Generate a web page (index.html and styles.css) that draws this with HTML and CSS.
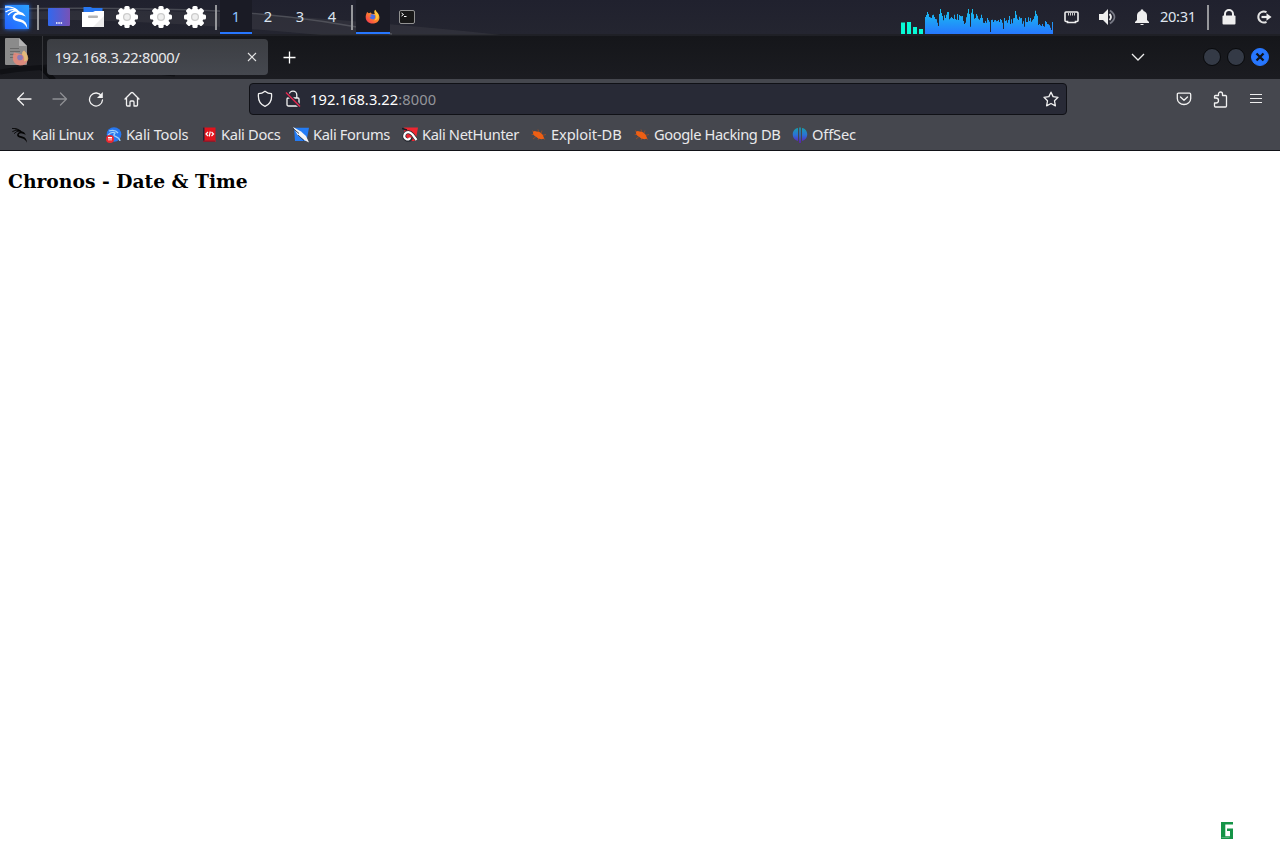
FILE: index.html
```html
<!DOCTYPE html>
<html lang="en">
<head>
<meta charset="utf-8">
<title>192.168.3.22:8000/</title>
<link rel="stylesheet" href="styles.css">
</head>
<body>
<svg class="defs" width="0" height="0">
  <defs>
    <linearGradient id="gKali" x1="0" y1="1" x2="1" y2="0"><stop offset="0" stop-color="#2463ff"/><stop offset="1" stop-color="#2ba0ff"/></linearGradient>
    <linearGradient id="gDesk" x1="0" y1="0" x2="1" y2="0"><stop offset="0" stop-color="#3168ee"/><stop offset="1" stop-color="#7852b6"/></linearGradient>
    <linearGradient id="gGraph" gradientUnits="userSpaceOnUse" x1="0" y1="8" x2="0" y2="34"><stop offset="0" stop-color="#16c6ee"/><stop offset="1" stop-color="#2777ff"/></linearGradient>
    <linearGradient id="gFox" x1="1" y1="0" x2="0" y2="1"><stop offset="0" stop-color="#ffe14a"/><stop offset=".45" stop-color="#ff8a2a"/><stop offset="1" stop-color="#f32b56"/></linearGradient>
    <linearGradient id="gOff" gradientUnits="userSpaceOnUse" x1="0" y1="0" x2="0" y2="16"><stop offset="0" stop-color="#16a3a8"/><stop offset=".5" stop-color="#2b72d6"/><stop offset="1" stop-color="#6417bb"/></linearGradient>
    <symbol id="dragon" viewBox="0 0 24 24">
      <path d="M0 2.200Q7 1 12.500 5.500M.5 7Q6 3 12.500 5.500M3 10Q7 5.500 12.500 6" fill="none" stroke="currentColor" stroke-width="1.300"/>
      <path d="M4 4Q11 3 14.500 6.500L18 8 20.800 11.500 16.500 10Q12 8.600 10.200 11C9.500 13 12 13.600 15.500 14.200Q22.500 16 22.300 23.500Q20 18 14.500 16.800C9 16 6.500 13.500 8.200 10.300Q9.500 8 12.300 7.300Q9 4.700 4 4Z" fill="currentColor"/>
    </symbol>
    <symbol id="gear" viewBox="0 0 22 22">
      <g fill="#fff"><circle cx="11" cy="11" r="8.600"/><rect x="8.400" y="0" width="5.200" height="22" rx="1.500"/><rect x="8.400" y="0" width="5.200" height="22" rx="1.500" transform="rotate(45 11 11)"/><rect x="8.400" y="0" width="5.200" height="22" rx="1.500" transform="rotate(90 11 11)"/><rect x="8.400" y="0" width="5.200" height="22" rx="1.500" transform="rotate(135 11 11)"/></g>
      <circle cx="11" cy="11" r="3.400" fill="#efefef" stroke="#cdcdcd" stroke-width="1.300"/>
    </symbol>
    <symbol id="fox" viewBox="0 0 16 16">
      <path d="M2.200 3.200 4 4.600 6.300 3.800 7 5 10.400 5.400C9.800 3.800 9.800 1.600 11 .8 11.300 2.500 13 3.200 14.500 5.600 17.400 12 12.500 15.500 8 15.500S.2 12 .8 7.400C1 5.700 1.700 5 2.200 3.200Z" fill="url(#gFox)"/>
      <path d="M5.200 6.400Q8 4.500 10.800 7 11.600 10.500 8.600 11.200 5.500 11.200 4.800 8.600L7.200 7.600Z" fill="#4a6fea"/>
      <path d="M11 .8C9.600 2.600 10.600 5 11.700 6.800 12.600 9.300 11 11.400 9.400 12 14 12 15 8 13.400 5 12.600 3.400 11.200 2.600 11 .8Z" fill="#ffc93d"/>
    </symbol>
    <symbol id="bug" viewBox="0 0 16 16">
      <path d="M1 3.700 4 5.500M.7 7.500 4 7.500M2 12 5 9.500M7 2.500 8 5.500M11 3.500 10 6.500M15 7.500 11 8.500M14 12.500 11 10.500M7 13 8 10.500" stroke="#a54c20" stroke-width=".8" fill="none"/>
      <path d="M2 5Q3.500 3.200 5.500 4.500 9 4.200 11.500 7.500L13.300 11.500 10.500 12.200Q7 12.200 4.700 9.600 1.800 8 2 5Z" fill="#ed5f14"/>
    </symbol>
  </defs>
</svg>

<header class="panel">
  <svg class="arc" width="640" height="35"><path d="M0 13C170 3 390 21 570 43L390 42Q180 19 0 19Z" fill="#777" opacity=".14"/><path d="M0 9Q120 7 218 11Q310 16 392 34" fill="none" stroke="#707278" opacity=".5" stroke-width="1.500"/></svg>
  <div class="cell"><svg class="kali" width="34" height="34"><rect x="5" y="5" width="24" height="24" fill="url(#gKali)"/><svg x="5" y="5" width="24" height="24" color="#fff"><use href="#dragon"/></svg></svg></div>
  <i class="sep"></i>
  <div class="cell"><svg width="22" height="18"><rect width="22" height="18" rx="1" fill="url(#gDesk)"/><path d="M8 15h1.500m.8 0h1.500m.8 0h1.500" stroke="#fff" stroke-width="1.600"/></svg></div>
  <div class="cell"><svg width="22" height="20"><path d="M1.500 0h7l2 1h10v8H1.500z" fill="#2777f2"/><path d="M0 5h11l2-1h9V20H0z" fill="#fff"/><path d="M22 9v11H11z" fill="#ececec"/><rect x="6" y="8.500" width="10" height="2.600" rx="1" fill="#b5b5b5"/></svg></div>
  <div class="cell"><svg width="22" height="22"><use href="#gear"/></svg></div>
  <div class="cell"><svg width="22" height="22"><use href="#gear"/></svg></div>
  <div class="cell"><svg width="22" height="22"><use href="#gear"/></svg></div>
  <i class="sep"></i>
  <nav class="spaces"><span class="active">1</span><span>2</span><span>3</span><span>4</span></nav>
  <i class="sep"></i>
  <div class="cell active"><svg width="15" height="15"><use href="#fox"/></svg></div>
  <div class="cell"><svg width="16" height="14"><rect x=".5" y=".5" width="15" height="13" rx="1.500" fill="#181818" stroke="#929292"/><path d="M2.500 3l2 1.500-2 1.500M5 6.500h2.500" fill="none" stroke="#fff"/></svg></div>
  <div class="tray">
    <svg class="graph" width="154" height="35">
      <g fill="#08fad6"><path d="M1 22.500h4V34H1zM7 22h4v12H7zM13 27h4v7h-4zM19 29h4v5h-4z"/></g>
      <path transform="translate(25)" fill="url(#gGraph)" d="M0 34V17h1V15h1V12h1V14h1V17h1V17.500h1V18h1V15.300h1V14.700h1V17h1V19h1V19.300h1V22.700h1V26h1V14h1V9h1V13h1V16h1V20.300h1V15.300h1V18h1V14.700h1V12h1V12h1V19.300h1V18.300h1V17h1V18h1V19h1V14.700h1V19h1V19.700h1V14h1V20h1V15h1V16h1V16.300h1V16h1V21h1V24h1V22.700h1V17.300h1V13.300h1V9h1V14h1V26.700h1V12.700h1V9h1V14.300h1V18.700h1V18h1V14h1V15.700h1V18.700h1V19.700h1V18h1V14.700h1V18h1V22.700h1V23h1V21h1V22.700h1V18h1V20h1V21.700h1V32h1V20h1V19.700h1V22h1V20.300h1V20h1V21.300h1V21h1V20h1V22h1V19h1V20h1V22.700h1V29h1V18h1V21h1V20.300h1V22.700h1V20h1V16h1V24h1V19.300h1V23.300h1V18.300h1V18h1V11h1V14.700h1V18.700h1V20h1V16.700h1V18.300h1V18h1V23.700h1V21.300h1V26.700h1V18h1V22h1V22h1V17.300h1V21h1V18h1V21.700h1V20.300h1V19h1V16.300h1V10.700h1V14h1V15.700h1V25h1V24h1V25.300h1V26h1V24h1V26h1V26.700h1V21h1V22h1V24h1V24.300h1V25.300h1V27.700h1V30h1V22h1V24V34Z"/>
    </svg>
    <div class="tcell net"><svg width="15" height="13"><path d="M2 1h11q1 0 1 1v7.500q0 1-1 1h-1.500v1h-8v-1H2q-1 0-1-1V2q0-1 1-1z" fill="none" stroke="#eee" stroke-width="1.600"/><path d="M4.500 2v2.500m2-2.500v2.500m2-2.500v2.500m2-2.500v2.500" stroke="#ccc"/></svg></div>
    <div class="tcell"><svg width="18" height="16"><path d="M0 5h4l5-5v16l-5-5H0z" fill="#eee"/><path d="M10.500 5q3 3 0 6" fill="none" stroke="#eee" stroke-width="1.800"/><path d="M11 1.500q9 6.500 0 13" fill="none" stroke="#777984" stroke-width="1.700"/></svg></div>
    <div class="tcell bell"><svg width="14" height="16"><path d="M0 14V13l2-2V6.500Q2 3 5.500 2L6 .5h2l.5 1.500Q12 3 12 6.500V11l2 2v1zM5 15h4l-1 1H6z" fill="#eee"/></svg></div>
    <time>20:31</time>
    <i class="sep"></i>
    <div class="cell"><svg width="14" height="16"><path d="M3 8V5a4 4 0 018 0v3" fill="none" stroke="#eee" stroke-width="2"/><rect x=".5" y="6.500" width="13" height="9" rx="1" fill="#eee"/></svg></div>
    <div class="cell exit"><svg width="16" height="14"><path d="M10.500 2.200A5.500 5.500 0 1010.500 11.800" fill="none" stroke="#e4e4e4" stroke-width="2"/><path d="M5.500 7H12" stroke="#eee" stroke-width="2.200"/><path d="M10.500 3.200L15.500 7l-5 3.800z" fill="#eee"/></svg></div>
  </div>
</header>

<div class="titlebar">
  <svg class="swirl" width="380" height="43"><path d="M0 36Q70 24 175 38" fill="none" stroke="#101115" stroke-width="5"/><path d="M42 32l12 12" stroke="#0c0d10" stroke-width="5"/></svg>
  <div class="appicon"><svg width="24" height="28"><path d="M1 0h13l8 8v18q0 1-1 1H1q-1 0-1-1V1q0-1 1-1z" fill="#8b8b8b"/><path d="M14 0v8h8z" fill="#b4b4b4"/><path d="M5 10.500h9M5 13.500h10M5 16.500h6M5 19.500h4" stroke="#686868"/><g transform="translate(7 11.500)" opacity=".85"><path d="M2 3Q6 3.500 10 5 10 2 12 1 17 6 16 10.500 14 16 8 16 1 15 .8 8.500 1 5 2 3Z" fill="#e98a7b"/><path d="M12 1Q17 6 16 10.500L12 12Q13 7 10 5 10 2 12 1Z" fill="#f0c478"/><circle cx="8" cy="8" r="2.800" fill="#8b78bd"/></g></svg></div>
  <div class="tab"><span>192.168.3.22:8000/</span><svg width="10" height="10"><path d="M1 1l8 8M9 1L1 9" stroke="#e4e4e4" stroke-width="1.100"/></svg></div>
  <svg class="plus" width="13" height="13"><path d="M6.500 .5v12M.5 6.500h12" stroke="#fff" stroke-width="1.300"/></svg>
  <svg class="chevron" width="14" height="8"><path d="M1 1l6 6 6-6" fill="none" stroke="#eee" stroke-width="1.300"/></svg>
  <div class="winbtns"><b></b><b></b><b class="close"><svg width="10" height="10"><path d="M1.500 1.500l7 7M8.500 1.500l-7 7" stroke="#101318" stroke-width="2.300"/></svg></b></div>
</div>

<div class="navbar">
  <div class="nbtn"><svg width="16" height="14"><path d="M15 7H1.500M7.500 1l-6 6 6 6" class="line"/></svg></div>
  <div class="nbtn dim"><svg width="16" height="14"><path d="M1 7h13.500M8.500 1l6 6-6 6" class="line"/></svg></div>
  <div class="nbtn"><svg width="16" height="16"><path d="M13.500 5A6.500 6.500 0 1014.500 9" class="line"/><path d="M14.800 1v6H9z" fill="#f2f2f2"/></svg></div>
  <div class="nbtn home"><svg width="16" height="16"><path d="M1 8l6.200-6.200q.8-.7 1.600 0L15 8M2.500 7v7q0 1 1 1H6v-4q0-1 1-1h2q1 0 1 1v4h2.500q1 0 1-1V7" class="line"/></svg></div>
  <div class="urlbar">
    <svg class="shield" width="16" height="18"><path d="M8 1.200Q11 3.600 14.500 3.700C15.200 10 12.500 14.500 8 16.300 3.500 14.500.8 10 1.500 3.700Q5 3.600 8 1.200z" class="line"/></svg>
    <svg class="lock" width="16" height="18"><path d="M4.200 7.500V5a3.800 3.800 0 017.600 0v2.500M3 8h10q1 0 1 1v6q0 1-1 1H3.500q-1.500 0-1.500-1.500V9q0-1 1-1z" class="line"/><path d="M1 2.500l14 14" stroke="#282a36" stroke-width="3.500"/><path d="M1 2.500l14 14" stroke="#e22850" stroke-width="1.500"/></svg>
    <p>192.168.3.22<span>:8000</span></p>
    <svg class="star" width="16" height="16"><path d="M8 1.200l2.100 4.400 4.900.7-3.500 3.500.9 5L8 12.500l-4.400 2.300.9-5L1 6.300l4.900-.7z" class="line"/></svg>
  </div>
  <div class="nav-end">
    <div class="nbtn"><svg width="16" height="14"><path d="M2.500 1.200h11q1.200 0 1.200 1.200V6.500a6.700 6 0 01-13.400 0V2.400q0-1.200 1.200-1.200zM4.500 5L8 8.200 11.500 5" class="line"/></svg></div>
    <div class="nbtn"><svg width="16" height="17"><path d="M2.500 7V5.500q0-1 1-1H6.500V3a2 2 0 014 0v1.500h3q1 0 1 1V15q0 1-1 1h-10q-1 0-1-1v-3H4a2.500 2.500 0 000-5z" class="line"/></svg></div>
    <div class="nbtn"><svg width="12" height="12"><path d="M0 1.500h12M0 5.500h12M0 9.500h12" stroke="#eee" stroke-width="1.200"/></svg></div>
  </div>
</div>

<nav class="bookmarks">
  <a class="b1"><svg width="16" height="16" color="#050505"><use href="#dragon"/></svg>Kali Linux</a>
  <a class="b2"><svg width="16" height="16"><circle cx="8" cy="7.500" r="7.300" fill="#2777ef"/><path d="M3 4q6-2 9 2M2 8q4-4 7-2c-4 5 4 2 5 8" stroke="#9fd0fa" fill="none" stroke-width="1.300"/><circle cx="4" cy="12" r="4" fill="#ed292f"/><path d="M2 10.500h4M3 10.500v3M5 10.500v3" stroke="#fff" fill="none"/></svg>Kali Tools</a>
  <a class="b3"><svg width="16" height="16"><path d="M2 .5h12.500V15H2z" fill="#e2131c"/><path d="M2 .5h1.500V15H2z" fill="#252536"/><path d="M2 13.500h12V15H2z" fill="#8b1c2b"/><path d="M7 5L5 7l2 2M10.500 5L12.500 7l-2 2M9.300 4.500L8.200 9.500" fill="none" stroke="#fff" stroke-width="1.200"/></svg>Kali Docs</a>
  <a class="b4"><svg width="16" height="16"><path d="M1 .8h15L13.500 14H2z" fill="#247cf5"/><path d="M0 0l8 4.500L13 9l3 6.500L11 13 5 8.500z" fill="#f5f5f5"/><path d="M0 1.500l6 5M5 8l6 5.500" stroke="#17202d" stroke-width=".8"/></svg>Kali Forums</a>
  <a class="b5"><svg width="16" height="16"><path d="M2 .5h14L13.500 14H3z" fill="#ed2631"/><path d="M0 1.500l5 1.500" stroke="#171b22" stroke-width="1.500"/><path d="M14.500 13L10.500 7.500Q6 3 2.800 7 1 11 5 13Q9 13.500 9 10.500" fill="none" stroke="#252a32" stroke-width="3.600"/><path d="M14.500 13L10.500 7.500Q6 3 2.800 7 1 11 5 12.500Q8 12.500 8 10.500" fill="none" stroke="#fff" stroke-width="2.200"/></svg>Kali NetHunter</a>
  <a class="b6"><svg width="16" height="16"><use href="#bug"/></svg>Exploit-DB</a>
  <a class="b7"><svg width="16" height="16"><use href="#bug"/></svg>Google Hacking DB</a>
  <a class="b8"><svg width="16" height="16"><path d="M6 1C-1 2-1 12.500 6 14zM10 1c7 1 7 11.500 0 13zM7.200 .5h1.600V16H7.200z" fill="url(#gOff)"/></svg>OffSec</a>
</nav>

<main class="page">
  <h3>Chronos - Date &amp; Time</h3>
  <svg class="badge" width="14" height="18"><path d="M0 0h12v2.500H4.300V14.300H9V9H6V6.500h6V17H0z" fill="#159447"/><path d="M.5 15.500h8" stroke="#55ae78"/></svg>
</main>
</body>
</html>
```
FILE: styles.css
```css
* { box-sizing: border-box; }
body {
  margin: 0;
  height: 855px;
  display: flex;
  flex-direction: column;
  overflow: hidden;
  background: #fff;
  color: #e9e9eb;
  font: 14.667px "Noto Sans", sans-serif;
}
svg { display: block; flex: none; }
.defs { position: absolute; }
.line { fill: none; stroke: #f2f2f2; stroke-width: 1.3; stroke-linecap: round; stroke-linejoin: round; }

.panel {
  position: relative;
  height: 36px;
  display: flex;
  background: linear-gradient(#20212e, #242530 34px, #1f2026 34px);
}
.arc, .swirl { position: absolute; left: 0; top: 0; }
.panel > :not(.arc) { position: relative; }
.cell { width: 34px; height: 34px; display: grid; place-items: center; }
.active { background: #1a1b25; border-bottom: 2px solid #2777ff; }
.cell.active { padding: 1px 1px 0 0; }
.kali { filter: drop-shadow(0 0 2px #2777ff); }
.sep { width: 8px; height: 25px; margin-top: 5px; display: flex; justify-content: center; }
.sep::before { content: ""; width: 2px; background: #96979b; }
.spaces { display: flex; height: 34px; color: #dce5f0; }
.spaces span { width: 32px; text-align: center; line-height: 32px; font-size: 14.667px; }
.spaces .active { color: #8dc5ff; }
.tray { display: flex; margin-left: auto; }
.graph { margin-right: 1px; }
.tcell { width: 35px; height: 34px; display: grid; place-items: center; }
.net { padding: 0 2px 0 0; }
.bell { padding-right: 2px; }
.exit { padding-left: 1px; }
.tray time { width: 44px; line-height: 32px; font-size: 14.667px; letter-spacing: -.35px; color: #dfe5ee; }

.titlebar {
  position: relative;
  height: 43px;
  display: flex;
  align-items: center;
  padding-bottom: 1px;
  background: linear-gradient(#15161a, #1b1c21);
}
.titlebar > :not(.swirl) { position: relative; }
.appicon { width: 43px; height: 43px; padding: 2px 0 0 5px; border-right: 1px solid #35363a; }
.tab {
  width: 221px;
  height: 36px;
  margin-left: 4px;
  padding: 0 11px 0 7.5px;
  display: flex;
  align-items: center;
  justify-content: space-between;
  border-radius: 4px;
  background: linear-gradient(#3c3e43, #45484f);
  letter-spacing: -.28px;
}
.plus { margin-left: 15px; }
.chevron { margin-left: auto; }
.winbtns { display: flex; align-items: center; gap: 6px; margin: 0 11px 0 58px; }
.winbtns b { width: 18px; height: 18px; border: 1px solid #08090b; border-radius: 50%; background: #343a46; }
.winbtns .close { display: grid; place-items: center; border-color: #2777ff; background: #2777ff; }

.navbar { height: 40px; padding: 0 6px; display: flex; align-items: center; background: #45474e; }
.nbtn { width: 36px; height: 36px; display: grid; place-items: center; }
.nbtn.dim { opacity: .42; }
.home { padding-right: 1px; }
.urlbar {
  width: 818px;
  height: 32px;
  margin-left: 99px;
  padding: 0 7px;
  display: flex;
  align-items: center;
  border: 1px solid #101116;
  border-radius: 4px;
  background: #282a36;
}
.lock { margin-left: 12px; }
.urlbar p { margin: 0 0 0 9px; color: #fff; letter-spacing: .09px; }
.urlbar p span { color: #94959b; }
.star { margin-left: auto; }
.nav-end { display: flex; margin-left: auto; }

.bookmarks {
  height: 32px;
  display: flex;
  padding-left: 12px;
  background: #45474e;
  border-bottom: 1px solid #111217;
}
.bookmarks a { height: 30px; display: flex; align-items: center; gap: 4px; white-space: nowrap; }
.bookmarks svg { margin-top: 2px; }
.b1 { width: 94px; letter-spacing: -.45px; }
.b2 { width: 95px; letter-spacing: -.2px; }
.b3 { width: 92px; letter-spacing: -.33px; }
.b4 { width: 109px; letter-spacing: -.36px; }
.b5 { width: 129px; letter-spacing: -.36px; }
.b6 { width: 103px; letter-spacing: -.1px; }
.b7 { width: 158px; letter-spacing: -.4px; }
.b8 { letter-spacing: -.17px; }

.page { position: relative; flex: 1; color: #000; padding: 0 8px; font-family: "DejaVu Serif", serif; }
.page h3 { margin: 19px 0 0; font-size: 18.72px; line-height: 22px; }
.badge { position: absolute; left: 1221px; top: 671px; }
```
